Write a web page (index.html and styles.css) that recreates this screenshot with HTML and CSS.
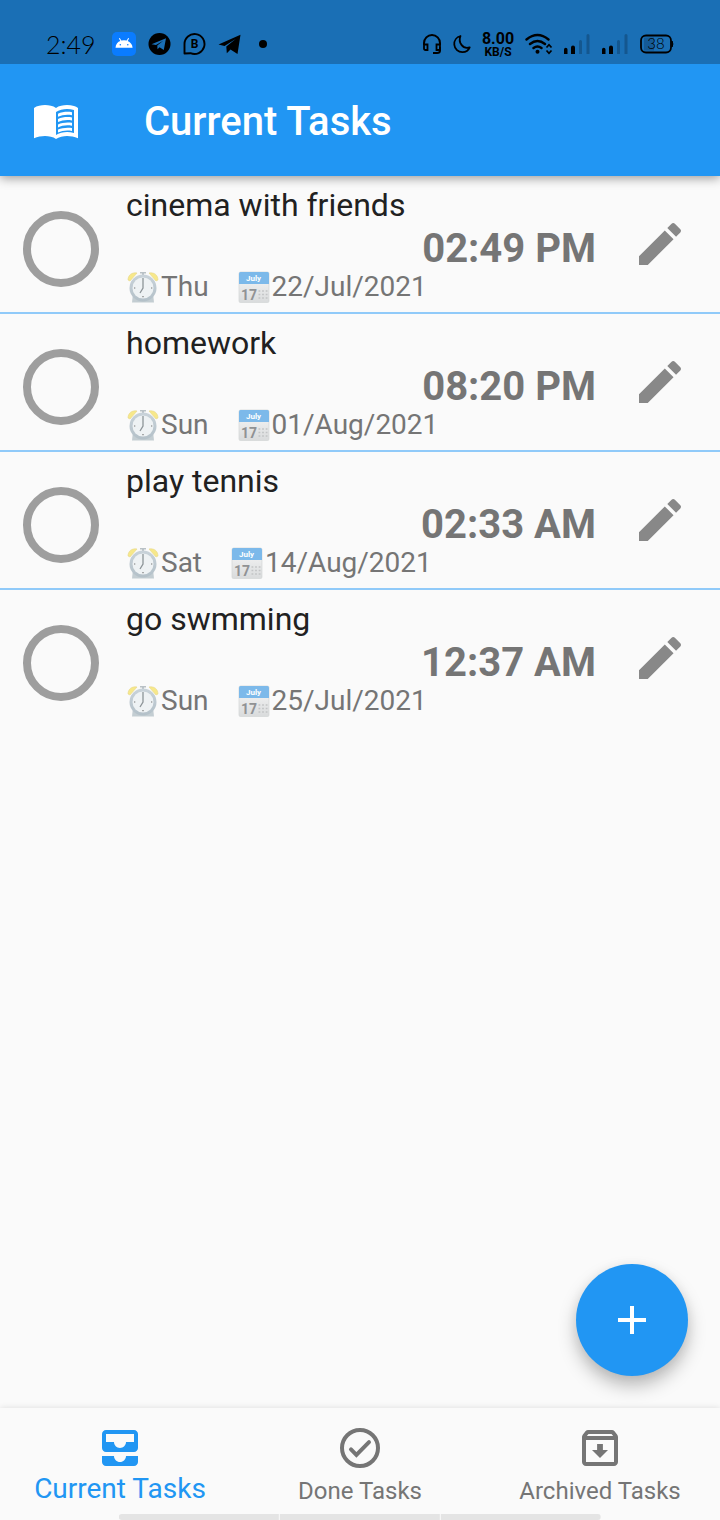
FILE: index.html
```html
<!DOCTYPE html>
<html lang="en">
<head>
<meta charset="utf-8">
<meta name="viewport" content="width=device-width, initial-scale=1">
<title>Current Tasks</title>
<link rel="stylesheet" href="styles.css">
</head>
<body>
<svg class="defs" aria-hidden="true">
  <defs>
    <linearGradient id="steel" x1="0" y1="0" x2="0" y2="1"><stop offset="0" stop-color="#c9d3da"/><stop offset="1" stop-color="#b3c0c8"/></linearGradient>
    <linearGradient id="paper" x1="0" y1="0" x2="0" y2="1"><stop offset="0" stop-color="#f8f8f8"/><stop offset="1" stop-color="#d9dbdc"/></linearGradient>
    <symbol id="alarm" viewBox="0 0 32 32">
      <path d="M1 9C1 4 5 1 10 2L3 10zM31 9C31 4 27 1 22 2l7 8z" fill="#f7e88a" stroke="#e6d68a" stroke-width=".6"/>
      <path d="M13 1h6v1.500h-2V5h-2V2.500h-2z" fill="#b9c1c6"/>
      <path d="M6 22h20l1 9.500H5z" fill="#c3cdd2"/>
      <circle cx="16" cy="17" r="13.500" fill="url(#steel)"/>
      <circle cx="16" cy="17" r="10.500" fill="#eef2f4"/>
      <path d="M16 7v10l-3 5" fill="none" stroke="#8d9498" stroke-width="1.300"/>
      <path d="M7 17h1.300M24 17h1.300M16 25v1.300" stroke="#777" stroke-width="1.200"/>
    </symbol>
    <symbol id="calendar" viewBox="0 0 32 32">
      <rect x="1" y="1" width="30" height="30.500" rx="1.500" fill="url(#paper)" stroke="#d2d5d6" stroke-width=".7"/>
      <path d="M1 2.500Q1 1 2.500 1h27Q31 1 31 2.500V13H1z" fill="#7cb9ea"/>
      <text class="cal-month" x="15.500" y="10" text-anchor="middle">July</text>
      <text class="cal-day" x="11" y="28.500" text-anchor="middle">17</text>
      <path d="M20.500 20h9M20.500 23.500h9M20.500 27h9" stroke="#c2c4c5" stroke-width="1.400" stroke-dasharray="1.800 1.800"/>
    </symbol>
    <symbol id="pencil" viewBox="0 0 24 24">
      <path d="M3 17.250V21h3.750L17.810 9.940l-3.750-3.750L3 17.250zM20.710 7.040c.39-.39.39-1.020 0-1.410l-2.340-2.340c-.39-.39-1.020-.39-1.410 0l-1.830 1.830 3.750 3.750 1.830-1.830z"/>
    </symbol>
    <symbol id="signal" viewBox="0 0 28 24">
      <path d="M0 17.500a1.500 1.500 0 0 1 3.500 0V22H0zM7 15.500a1.500 1.500 0 0 1 4 0V22H7z"/>
      <path d="M15 9.500a1.500 1.500 0 0 1 3 0V22h-3zM22.500 3.500a1.500 1.500 0 0 1 3 0V22h-3z" fill="#14578f"/>
    </symbol>
  </defs>
</svg>
<div class="app">
  <div class="status">
    <div class="status-left">
      <span class="clock">2:49</span>
      <svg class="ic24" viewBox="0 0 24 24"><rect width="24" height="24" rx="5" fill="#0a7cff"/><path d="M3.500 15.700C3.700 12 6 9.800 8.300 9L6.900 6.400l.9-.5L9.300 8.600q2.900-.8 5.400 0l1.500-2.700.9.500L15.700 9c2.400 1 4.700 3.200 4.900 6.700z" fill="#fff"/><circle cx="8.300" cy="12.700" r=".8" fill="#0a7cff"/><circle cx="15.800" cy="12.700" r=".8" fill="#0a7cff"/></svg>
      <svg class="ic24" viewBox="0 0 24 24"><circle cx="12.500" cy="12" r="11"/><path d="M4.500 12.200L19 6.300 16.800 18l-4.300-2.800-2 2-.2-3.700 5.900-4.700-7.200 4.300z" fill="#1a6fb5"/></svg>
      <svg class="ic24" viewBox="0 0 24 24"><path d="M2.500 21.500V12a10 10 0 1 1 6 9.200z" fill="none" stroke="#000" stroke-width="1.900" stroke-linejoin="round"/><text class="bubble-b" x="12.500" y="16.200" text-anchor="middle">B</text></svg>
      <svg class="ic24" viewBox="0 0 24 24"><path d="M1.500 12.500L23.500 2.800 20.500 22l-7-4.600-3.700 3.800-.5-6.700 9.400-7.500-11.200 7z"/></svg>
      <svg class="ic24" viewBox="0 0 24 24"><circle cx="11" cy="12" r="4"/></svg>
    </div>
    <div class="status-right">
      <svg class="ic20" viewBox="0 0 20 24"><path d="M2 13v-2a8 8 0 0 1 16 0v2M18 15v3.500q0 2.500-3 2.500h-4" fill="none" stroke="#000" stroke-width="2"/><path d="M2 12.500h3.500v5.500H3.500Q2 18 2 16.500zM18 12.500h-3.500v5.500h2Q18 18 18 16.500z" fill="none" stroke="#000" stroke-width="1.800"/></svg>
      <svg class="ic20" viewBox="0 0 20 24"><path d="M8.500 4C4.500 5 2 8.500 2.300 12.700c.4 4.500 4 7.600 8.200 7.500 3.300-.1 6-2 7.200-4.900-3 1-6.200.2-8.200-2.400S7.200 7 8.500 4z" fill="none" stroke="#000" stroke-width="1.800" stroke-linejoin="round"/></svg>
      <span class="speed"><b>8.00</b><small>KB/S</small></span>
      <svg class="wifi" viewBox="0 0 30 24"><path d="M2.500 7.500q11-9 22 0M6 12q7.500-6 15 0M9.500 16q4-3 8 0" fill="none" stroke="#000" stroke-width="2.400" stroke-linecap="round"/><circle cx="13.500" cy="19.800" r="2"/><path d="M22.500 15.500L25 12.700l2.500 2.800M22.500 18.500l2.500 2.800 2.500-2.800" fill="none" stroke="#000" stroke-width="1.700"/></svg>
      <svg class="signal"><use href="#signal"/></svg>
      <svg class="signal"><use href="#signal"/></svg>
      <svg class="battery" viewBox="0 0 34 24"><rect x="4" y="5.500" width="10" height="13" fill="#155a96"/><rect x="1" y="3.500" width="30" height="17" rx="5" fill="none" stroke="#000" stroke-width="1.800"/><path d="M32 9q1.800 3 0 6z" stroke="#000"/><text class="charge" x="16" y="17" text-anchor="middle">38</text></svg>
    </div>
  </div>

  <header class="appbar">
    <button class="menu" aria-label="Open book">
      <svg viewBox="0 0 24 24"><path fill-rule="evenodd" d="M21 5c-1.110-.35-2.330-.5-3.500-.5-1.950 0-4.050.4-5.500 1.500-1.450-1.100-3.550-1.500-5.500-1.500S2.450 4.900 1 6v15.150C2.700 20.350 4.800 20 6.500 20c1.950 0 4.050.4 5.500 1.500 1.350-.85 3.800-1.500 5.500-1.500 1.700 0 3.800.35 5.500 1.150V6c-.6-.45-1.250-.75-2-1zM21 18.500c-1.100-.35-2.300-.5-3.500-.5-1.700 0-4.150.65-5.500 1.500V8c1.350-.85 3.800-1.500 5.500-1.500 1.200 0 2.400.15 3.500.5z"/><path d="M13 10.400c2-1 4.600-1.300 7-.8V8.100c-2.400-.4-5-.1-7 .8zM13 13c2-1 4.600-1.300 7-.8v-1.500c-2.400-.4-5-.1-7 .8zM13 15.700c2-1 4.600-1.300 7-.8v-1.500c-2.400-.4-5-.1-7 .8zM13 18.300c2-1 4.600-1.300 7-.8V16c-2.400-.4-5-.1-7 .8z"/></svg>
    </button>
    <h1>Current Tasks</h1>
  </header>

  <main class="content">
    <ul class="tasks">
      <li class="task">
        <input type="checkbox" id="t1"><div class="info"><label class="title" for="t1">cinema with friends</label><span class="time">02:49 PM</span><span class="when"><span class="part"><svg><use href="#alarm"/></svg>Thu</span><span class="part"><svg><use href="#calendar"/></svg>22/Jul/2021</span></span></div>
        <button class="edit" aria-label="Edit"><svg><use href="#pencil"/></svg></button>
      </li>
      <li class="task">
        <input type="checkbox" id="t2"><div class="info"><label class="title" for="t2">homework</label><span class="time">08:20 PM</span><span class="when"><span class="part"><svg><use href="#alarm"/></svg>Sun</span><span class="part"><svg><use href="#calendar"/></svg>01/Aug/2021</span></span></div>
        <button class="edit" aria-label="Edit"><svg><use href="#pencil"/></svg></button>
      </li>
      <li class="task">
        <input type="checkbox" id="t3"><div class="info"><label class="title" for="t3">play tennis</label><span class="time">02:33 AM</span><span class="when"><span class="part"><svg><use href="#alarm"/></svg>Sat</span><span class="part"><svg><use href="#calendar"/></svg>14/Aug/2021</span></span></div>
        <button class="edit" aria-label="Edit"><svg><use href="#pencil"/></svg></button>
      </li>
      <li class="task">
        <input type="checkbox" id="t4"><div class="info"><label class="title" for="t4">go swmming</label><span class="time">12:37 AM</span><span class="when"><span class="part"><svg><use href="#alarm"/></svg>Sun</span><span class="part"><svg><use href="#calendar"/></svg>25/Jul/2021</span></span></div>
        <button class="edit" aria-label="Edit"><svg><use href="#pencil"/></svg></button>
      </li>
    </ul>
    <button class="fab" aria-label="Add task"><svg viewBox="0 0 24 24"><path d="M19 13h-6v6h-2v-6H5v-2h6V5h2v6h6v2z"/></svg></button>
  </main>

  <nav class="tabs">
    <a class="tab active" href="#current"><svg viewBox="0 0 24 24"><path fill-rule="evenodd" d="M19 3H5c-1.100 0-2 .9-2 2v7c0 1.100.9 2 2 2h14c1.100 0 2-.9 2-2V5c0-1.100-.9-2-2-2zM19 9h-4c0 1.620-1.380 3-3 3s-3-1.380-3-3H5V5h14zM15 16h6v3c0 1.100-.9 2-2 2H5c-1.100 0-2-.9-2-2v-3h6c0 1.660 1.340 3 3 3s3-1.340 3-3z"/></svg><span>Current Tasks</span></a>
    <a class="tab" href="#done"><svg viewBox="0 0 24 24"><circle cx="12" cy="12" r="9" fill="none" stroke="currentColor" stroke-width="2"/><path d="M7.500 12.700l2.700 2.700 6.300-6.300" fill="none" stroke="currentColor" stroke-width="2" stroke-linecap="round"/></svg><span>Done Tasks</span></a>
    <a class="tab" href="#archived"><svg viewBox="0 0 24 24"><path d="M20.540 5.230l-1.390-1.680C18.880 3.210 18.470 3 18 3H6c-.47 0-.88.21-1.160.55L3.460 5.230C3.170 5.570 3 6.020 3 6.500V19c0 1.100.9 2 2 2h14c1.100 0 2-.9 2-2V6.500c0-.48-.17-.93-.46-1.270zM6.240 5h11.520l.83 1H5.420l.82-1zM5 19V8h14v11H5zm8.450-9h-2.900v3H8l4 4 4-4h-2.550z"/></svg><span>Archived Tasks</span></a>
    <div class="gesture" aria-hidden="true"><i></i><i></i><i></i></div>
  </nav>
</div>
</body>
</html>
```
FILE: styles.css
```css
* {
  box-sizing: border-box;
}

body {
  margin: 0;
  font-family: Roboto, sans-serif;
  background: #fafafa;
  color: #757575;
}

svg {
  display: block;
  flex: none;
}

button {
  border: 0;
  padding: 0;
  background: none;
  cursor: pointer;
}

.defs {
  position: absolute;
  width: 0;
  height: 0;
}

.app {
  min-height: 100vh;
  display: flex;
  flex-direction: column;
}

/* Status bar */
.status {
  position: relative;
  z-index: 1;
  display: flex;
  justify-content: space-between;
  height: 64px;
  padding: 24px 46px 0;
  background: #1a6fb5;
  color: #000;
}

.status-left,
.status-right {
  display: flex;
  align-items: center;
  gap: 10px;
}

.status-left {
  gap: 11px;
}

.clock {
  width: 55px;
  font: 300 25px/32px Lato, sans-serif;
}

.ic24 {
  width: 24px;
  height: 24px;
}

.ic20 {
  width: 20px;
  height: 24px;
}

.wifi {
  width: 30px;
  height: 24px;
}

.signal {
  width: 28px;
  height: 24px;
}

.battery {
  width: 34px;
  height: 24px;
}

.bubble-b {
  font: bold 12px Roboto, sans-serif;
}

.charge {
  font: 300 15px Lato, sans-serif;
}

.speed {
  display: flex;
  flex-direction: column;
  align-items: center;
  width: 32px;
  padding-top: 2px;
}

.speed b {
  font-size: 16px;
  line-height: 14px;
}

.speed small {
  font-size: 12px;
  line-height: 12px;
  font-weight: 700;
}

/* App bar */
.appbar {
  position: relative;
  display: flex;
  align-items: center;
  gap: 64px;
  height: 112px;
  padding: 0 32px;
  background: #2196f3;
  color: #fff;
  box-shadow: 0 2px 10px rgba(0, 0, 0, 0.4);
}

.menu svg {
  width: 48px;
  height: 48px;
  fill: #fff;
}

.appbar h1 {
  margin: 0;
  padding-top: 4px;
  font-size: 40px;
  line-height: 48px;
  font-weight: 500;
}

/* Task list */
.content {
  position: relative;
  flex: 1;
}

.tasks {
  margin: 0;
  padding: 0;
  list-style: none;
}

.task {
  display: flex;
  align-items: center;
  padding: 9px 32px 9px 23px;
}

.task + .task {
  border-top: 2px solid #90caf9;
}

.task input {
  appearance: none;
  flex: none;
  width: 76px;
  height: 76px;
  margin: 10px 27px 0 0;
  border: 8px solid #9e9e9e;
  border-radius: 50%;
}

.task input:checked {
  background: #9e9e9e;
}

.info {
  flex: 1;
  display: flex;
  flex-direction: column;
}

.title {
  font-size: 32px;
  line-height: 40px;
  color: #212121;
}

.time {
  align-self: flex-end;
  font-size: 40px;
  line-height: 48px;
  font-weight: 700;
}

.when {
  display: flex;
  gap: 29px;
  margin-top: -2px;
  font-size: 28px;
  line-height: 32px;
}

.part {
  display: flex;
  gap: 2px;
}

.part svg {
  width: 32px;
  height: 32px;
}

.part:first-child {
  padding-left: 1px;
}

.cal-month {
  font: bold 8px Roboto, sans-serif;
  fill: #fff;
}

.cal-day {
  font: bold 14px Roboto, sans-serif;
  fill: #909294;
}

.edit {
  margin-left: 36px;
}

.edit svg {
  width: 56px;
  height: 56px;
  fill: #888;
}

.fab {
  position: absolute;
  right: 32px;
  bottom: 32px;
  display: grid;
  place-items: center;
  width: 112px;
  height: 112px;
  border-radius: 50%;
  background: #2196f3;
  box-shadow: 0 10px 18px rgba(0, 0, 0, 0.25), 0 2px 12px rgba(0, 0, 0, 0.06);
}

.fab svg {
  width: 48px;
  height: 48px;
  fill: #fff;
}

/* Bottom navigation */
.tabs {
  position: relative;
  display: grid;
  grid-template-columns: repeat(3, 1fr);
  height: 112px;
  padding-top: 16px;
  background: #fafafa;
  box-shadow: 0 0 6px rgba(0, 0, 0, 0.12);
}

.tab {
  display: flex;
  flex-direction: column;
  align-items: center;
  font-size: 24px;
  line-height: 38px;
  color: #757575;
  text-decoration: none;
}

.tab svg {
  width: 48px;
  height: 48px;
  fill: currentColor;
}

.tab.active {
  font-size: 28px;
  line-height: 34px;
  color: #2196f3;
}

.gesture {
  position: absolute;
  left: 50%;
  bottom: 0;
  display: flex;
  gap: 1px;
  width: 67%;
  height: 6px;
  border-radius: 4px;
  overflow: hidden;
  transform: translateX(-50%);
}

.gesture i {
  flex: 1;
  background: #e4e4e4;
}
```
